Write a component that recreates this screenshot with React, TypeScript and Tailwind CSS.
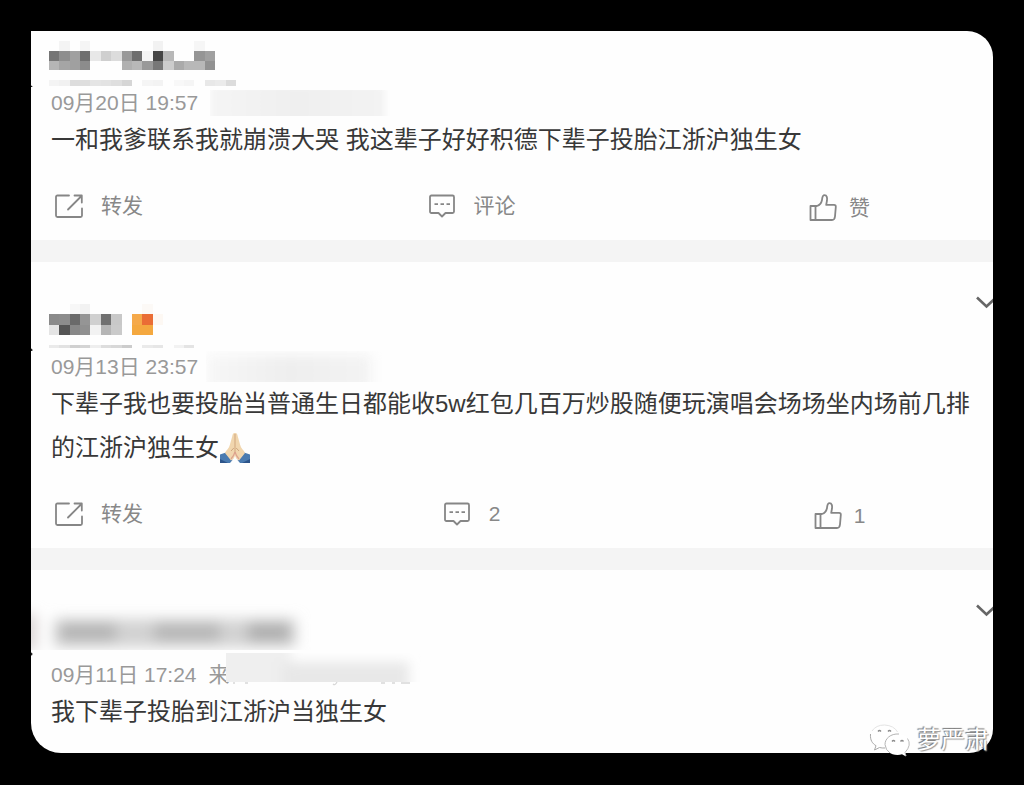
import type { ReactNode } from "react";

const CELL = 10.4;

type MosaicRow = { y: number; h: number; colors: string[] };

function Mosaic({ x, rows }: { x: number; rows: MosaicRow[] }) {
  return (
    <g shapeRendering="crispEdges">
      {rows.map((row) =>
        row.colors.map((c, i) =>
          c ? <rect key={`${row.y}-${i}`} x={x + i * CELL} y={row.y} width={CELL} height={row.h} fill={c} /> : null
        )
      )}
    </g>
  );
}

function ShareIcon() {
  return (
    <svg width="28" height="26" viewBox="0 0 28 26" fill="none" stroke="#868686" strokeWidth="1.8" strokeLinejoin="round" strokeLinecap="round" aria-hidden="true">
      <path d="M14 2.5H2.500Q1 2.500 1 4V22.500Q1 24 2.500 24H25.500Q27 24 27 22.500V15.500" />
      <path d="M13 16.500L26 3.500M19.500 2.500H26.800V9.500" />
    </svg>
  );
}

function CommentIcon() {
  return (
    <svg width="26" height="24" viewBox="0 0 26 24" fill="none" stroke="#868686" strokeWidth="1.8" strokeLinejoin="round" aria-hidden="true">
      <path d="M2.500 1.500H23.500Q25 1.500 25 3V17.500Q25 19 23.500 19H16.500L13 22.500L9.500 19H2.500Q1 19 1 17.500V3Q1 1.500 2.500 1.500Z" />
      <path d="M5.500 10.200H9M11.500 10.200H15M17.500 10.200H21" />
    </svg>
  );
}

function LikeIcon() {
  return (
    <svg width="28" height="28" viewBox="0 0 28 28" fill="none" stroke="#868686" strokeWidth="1.8" strokeLinejoin="round" aria-hidden="true">
      <path d="M1.500 12H8C11 11 12.400 9 13 6C13.300 3.500 13.400 1.200 15.500 1.200C18 1.200 18.300 4 18 6.500L17.200 10.800H25Q27 10.800 26.800 13L26 22.500Q25.600 26 23 26H1.500Z" />
      <path d="M6.500 12V26" />
    </svg>
  );
}

function MenuButton() {
  return (
    <button type="button" aria-label="更多" className="absolute top-[33px] -right-1 h-4 w-[21px]">
      <svg width="21" height="16" viewBox="0 0 21 16" fill="none" stroke="#666" strokeWidth="2.6" aria-hidden="true">
        <path d="M1 2.500L10.500 11.500L20 2.500" />
      </svg>
    </button>
  );
}

function PrayIcon() {
  return (
    <svg role="img" aria-label="🙏🏻" className="inline-block align-[-8px]" width="32" height="32" viewBox="0 0 32 32">
      <path d="M1 22.500L7 20.500L13.500 28L11 31H1Z" fill="#4a7bb0" />
      <path d="M31 22.500L25 20.500L18.500 28L21 31H31Z" fill="#4a7bb0" />
      <path d="M1 27L9 31H1ZM31 27L23 31H31Z" fill="#2c548a" />
      <path d="M16 1C14.300 .6 13.600 2 13.200 4.500L10.800 13C10.300 16 7 18.500 6 21L12 28.500C14.500 27.500 15.500 25.500 16 23.500C16.500 25.500 17.500 27.500 20 28.500L26 21C25 18.500 21.700 16 21.200 13L18.800 4.500C18.400 2 17.700 .6 16 1Z" fill="#f1d6ae" />
      <path d="M16 2V22M12 19L14.800 16M20 19L17.200 16" fill="none" stroke="#cfa67e" strokeWidth="1" />
      <path d="M16 20Q14.800 24 12 27M16 20Q17.200 24 20 27" fill="none" stroke="#dda38e" strokeWidth="1.2" />
    </svg>
  );
}

function Actions({ comment, like }: { comment: string; like: string }) {
  return (
    <div className="mt-[22px] grid h-11 grid-cols-[257fr_368fr_337fr] text-[21px] leading-[44px] text-[#888]">
      <button type="button" className="flex h-11 items-center gap-[18px] pl-6">
        <ShareIcon />
        转发
      </button>
      <button type="button" className="flex h-11 items-center justify-center gap-[19px]">
        <CommentIcon />
        {comment}
      </button>
      <button type="button" className="flex h-11 items-center justify-center gap-3 pt-1 pl-[30px]">
        <LikeIcon />
        {like}
      </button>
    </div>
  );
}

function DateRow({ date, children }: { date: string; children?: ReactNode }) {
  return (
    <div className="flex h-[31px] items-center pl-5 text-[21px] leading-[31px] whitespace-nowrap text-[#999]">
      <time>{date}</time>
      {children}
    </div>
  );
}

function Body({ children }: { children: ReactNode }) {
  return <p className="pr-1 pl-5 text-[24px] leading-[44px] text-[#383838]">{children}</p>;
}

function Watermark() {
  return (
    <div className="absolute right-1 -bottom-1 flex items-center gap-[6px]">
      <svg width="42" height="34" viewBox="0 0 42 34" fill="#fff" aria-hidden="true">
        <path d="M15.500 2C7.500 2 1.500 7 1.500 13.500C1.500 17.500 3.500 20.500 7 22.700L5.500 27L10.500 24.500C14 25.500 17 25.500 20 24.500L29 9C27 4.500 22 2 15.500 2Z" />
        <path d="M1.500 11C1 17.500 3.500 20.500 7 22.700L5.500 27L10.500 24.500Q13 25.200 16 25" fill="none" stroke="#aaa" strokeWidth="1" />
        <path d="M3 8Q7 2 15.500 2Q25 2.500 28.500 9" fill="none" stroke="#e4e4e4" strokeWidth="1" />
        <path d="M28.500 11C21.500 11 16 15.500 16 21.500S21.500 32 28.500 32Q31 32 33 31.300L37 33.500L36 30C39 28 41 25 41 21.500C41 15.500 35.500 11 28.500 11Z" />
        <path d="M30 11C21.500 10.500 16 15.500 16 21.500Q16.500 27 21 30" fill="none" stroke="#b4b4b4" strokeWidth="1" />
        <path d="M38.500 15.500Q43 22 36 29.500L37 33" fill="none" stroke="#bbb" strokeWidth="1" />
        <path d="M9 8.500Q10.500 6.500 12 8.500M19 8.500Q20.500 6.500 22 8.500M23 18.500Q24.500 16.500 26 18.500M31.500 18.500Q33 16.500 34.500 18.500" fill="none" stroke="#8c8c8c" strokeWidth="1.3" />
      </svg>
      <span className="text-[24px] leading-[34px] text-white [text-shadow:-1px_-1px_1px_#777,1px_1px_1px_#999]">萝严肃</span>
    </div>
  );
}

export default function App() {
  return (
    <main className="min-h-screen bg-black px-[31px] pt-[31px] pb-8 font-['Liberation_Sans','Noto_Sans_CJK_SC',sans-serif]">
      <div className="relative">
        <div className="overflow-hidden rounded-tr-[26px] rounded-br-[24px] rounded-bl-[30px] bg-[#fefefe]">
          <article className="pb-3">
            <svg className="block" width="400" height="56" viewBox="31 31 400 56" aria-hidden="true">
              <Mosaic
                x={48.7}
                rows={[
                  { y: 41, h: 10, colors: ["", "#f4f4f4", "", "#f5f5f5", "", "", "", "", "", "", "#f2f2f2", "", "", "", "#f6f6f6"] },
                  { y: 51, h: 10, colors: ["#757575", "#8e8e8e", "#a0a0a0", "#6f6f6f", "#e8e8e8", "#cfcfcf", "#dcdcdc", "#999", "#6e6e6e", "#f4f4f4", "#454545", "#b8b8b8", "", "", "#959595", "#a0a0a0"] },
                  { y: 61, h: 9, colors: ["#b5b5b5", "#a5a5a5", "#a0a0a0", "#8c8c8c", "", "", "", "#b0b0b0", "#b8b8b8", "#999", "#777", "#ccc", "#aaa", "#b8b8b8", "#b8b8b8", "#929292"] },
                  { y: 80, h: 6, colors: ["#f4f4f4", "#f1f1f1", "#ddd", "#dedede", "#e5e5e5", "#e3e3e3", "#dfdfdf", "#d6d6d6", "", "#f5f5f5", "#f3f3f3", "", "#f8f8f8", "#f5f5f5", "", "#e8e8e8", "#ebebeb", "#dcdcdc"] },
                ]}
              />
              <circle cx="31" cy="87" r="1.5" fill="#222" />
            </svg>
            <DateRow date="09月20日 19:57">
              <div className="ml-3 h-[26px] w-[190px] overflow-hidden">
                <div className="-mt-1 h-9 w-[175px] bg-linear-to-r from-[#f5f5f5] via-[#efefef] to-[#f3f3f3] blur-[3px]" />
              </div>
            </DateRow>
            <Body>一和我爹联系我就崩溃大哭 我这辈子好好积德下辈子投胎江浙沪独生女</Body>
            <Actions comment="评论" like="赞" />
          </article>

          <div className="h-[22px] bg-[#f4f4f4]" />

          <article className="relative pb-3">
            <MenuButton />
            <svg className="block" width="400" height="89" viewBox="31 262 400 89" aria-hidden="true">
              <Mosaic
                x={48.7}
                rows={[
                  { y: 304, h: 10, colors: ["", "", "#f7f7f7", "#f2f2f2", "", "", "", "", "", "#fcf9f6"] },
                  { y: 314, h: 11, colors: ["#8a8a8a", "#8c8c8c", "#6a6a6a", "#959595", "#d0d0d0", "#707070", "#c8c8c8", "", "#f5a94a", "#ea6d35", "#fdf8f3"] },
                  { y: 325, h: 10, colors: ["#e4e4e4", "#555", "#888", "#909090", "#f2f2f2", "#b5b5b5", "#cacaca", "", "#f4a83f", "#f4a83f"] },
                  { y: 345, h: 3, colors: ["#eaeaea", "#e2e2e2", "#d0d0d0", "#d4d4d4", "#eee", "#ddd", "#d8d8d8", "#ccc", "", "#eaeaea", "#e6e6e6", "", "#f2f2f2", "#e4e4e4"] },
                ]}
              />
              <circle cx="31" cy="350" r="1.5" fill="#222" />
            </svg>
            <DateRow date="09月13日 23:57">
              <div className="ml-2 h-[31px] w-[195px] overflow-hidden">
                <div className="mt-1 h-9 w-[165px] bg-linear-to-r from-[#f7f7f7] via-[#eeeeee] to-[#f3f3f3] blur-[6px]" />
              </div>
            </DateRow>
            <Body>
              下辈子我也要投胎当普通生日都能收5w红包几百万炒股随便玩演唱会场场坐内场前几排的江浙沪独生女
              <PrayIcon />
            </Body>
            <Actions comment="2" like="1" />
          </article>

          <div className="h-[22px] bg-[#f4f4f4]" />

          <article className="relative pb-[19px]">
            <MenuButton />
            <svg className="block" width="400" height="89" viewBox="31 570 400 89" aria-hidden="true">
              <defs>
                <filter id="smear" filterUnits="userSpaceOnUse" x="0" y="580" width="440" height="100">
                  <feGaussianBlur stdDeviation="7" />
                </filter>
                <clipPath id="band">
                  <rect x="31" y="600" width="400" height="50" />
                </clipPath>
              </defs>
              <g clipPath="url(#band)">
                <g filter="url(#smear)">
                  <rect x="22" y="614" width="14" height="36" fill="#d8d0d0" />
                  <rect x="54" y="619" width="242" height="28" fill="#d2d2d2" />
                  <rect x="60" y="623" width="56" height="18" fill="#b4b4b4" />
                  <rect x="154" y="623" width="66" height="18" fill="#b6b6b6" />
                  <rect x="248" y="623" width="42" height="18" fill="#adadad" />
                </g>
              </g>
              <circle cx="31" cy="654" r="1.5" fill="#222" />
            </svg>
            <DateRow date="09月11日 17:24">
              <span className="ml-3">来</span>
              <svg className="-mt-2 -ml-1 block" width="200" height="38" viewBox="225 652 200 38" aria-hidden="true">
                <defs>
                  <filter id="soft" filterUnits="userSpaceOnUse" x="190" y="630" width="260" height="80">
                    <feGaussianBlur stdDeviation="6" />
                  </filter>
                  <clipPath id="source">
                    <rect x="225" y="653" width="200" height="29" />
                  </clipPath>
                </defs>
                <g clipPath="url(#source)">
                  <g filter="url(#soft)">
                    <rect x="205" y="640" width="85" height="60" fill="#efefef" />
                    <rect x="280" y="662" width="128" height="38" fill="#e8e8e8" />
                  </g>
                </g>
                <path d="M232 683H234M244 683H247M332 684Q334 686 336 682M380 683H384M391 683H394M400 683H409" fill="none" stroke="#d8d8d8" strokeWidth="1.3" />
              </svg>
            </DateRow>
            <Body>我下辈子投胎到江浙沪当独生女</Body>
          </article>
        </div>
        <Watermark />
      </div>
    </main>
  );
}
